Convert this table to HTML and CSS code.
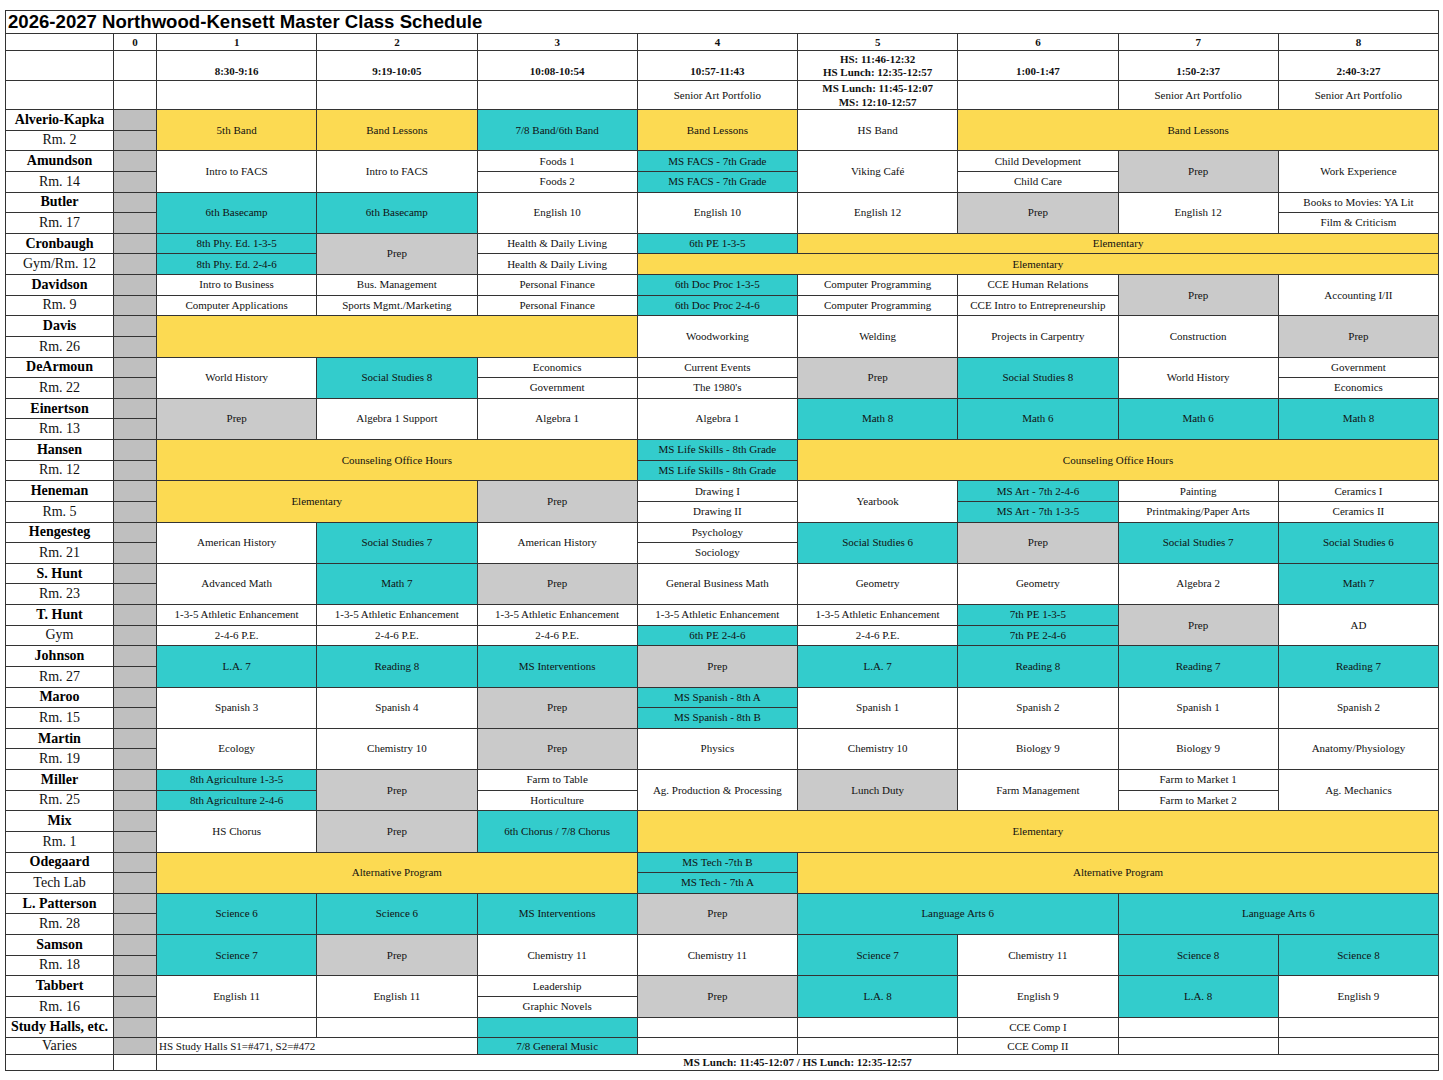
FILE: index.html
```html
<!DOCTYPE html>
<html>
<head>
<meta charset="utf-8">
<title>2026-2027 Northwood-Kensett Master Class Schedule</title>
<link rel="stylesheet" href="styles.css">
</head>
<body>
<table class="sched">
<colgroup><col class="ca"><col class="c0"><col class="cp"><col class="cp"><col class="cp"><col class="cp"><col class="cp"><col class="cp"><col class="cp"><col class="cp"></colgroup>
<tr class="h-title"><td colspan="10" class="title">2026-2027 Northwood-Kensett Master Class Schedule</td></tr>
<tr class="h-num"><td></td><td>0</td><td>1</td><td>2</td><td>3</td><td>4</td><td>5</td><td>6</td><td>7</td><td>8</td></tr>
<tr class="h-time"><td></td><td></td><td>8:30-9:16</td><td>9:19-10:05</td><td>10:08-10:54</td><td>10:57-11:43</td><td class="two">HS: 11:46-12:32<br>HS Lunch: 12:35-12:57</td><td>1:00-1:47</td><td>1:50-2:37</td><td>2:40-3:27</td></tr>
<tr class="h-sen"><td></td><td></td><td></td><td></td><td></td><td>Senior Art Portfolio</td><td class="bold">MS Lunch: 11:45-12:07<br>MS: 12:10-12:57</td><td></td><td>Senior Art Portfolio</td><td>Senior Art Portfolio</td></tr>

<tr class="r"><td class="tn">Alverio-Kapka</td><td class="z"></td><td rowspan="2" class="y">5th Band</td><td rowspan="2" class="y">Band Lessons</td><td rowspan="2" class="t">7/8 Band/6th Band</td><td rowspan="2" class="y">Band Lessons</td><td rowspan="2">HS Band</td><td rowspan="2" colspan="3" class="y">Band Lessons</td></tr>
<tr class="r"><td class="rm">Rm. 2</td><td class="z"></td></tr>

<tr class="r"><td class="tn">Amundson</td><td class="z"></td><td rowspan="2">Intro to FACS</td><td rowspan="2">Intro to FACS</td><td>Foods 1</td><td class="t">MS FACS - 7th Grade</td><td rowspan="2">Viking Café</td><td>Child Development</td><td rowspan="2" class="g">Prep</td><td rowspan="2">Work Experience</td></tr>
<tr class="r"><td class="rm">Rm. 14</td><td class="z"></td><td>Foods 2</td><td class="t">MS FACS - 7th Grade</td><td>Child Care</td></tr>

<tr class="r"><td class="tn">Butler</td><td class="z"></td><td rowspan="2" class="t">6th Basecamp</td><td rowspan="2" class="t">6th Basecamp</td><td rowspan="2">English 10</td><td rowspan="2">English 10</td><td rowspan="2">English 12</td><td rowspan="2" class="g">Prep</td><td rowspan="2">English 12</td><td>Books to Movies: YA Lit</td></tr>
<tr class="r"><td class="rm">Rm. 17</td><td class="z"></td><td>Film &amp; Criticism</td></tr>

<tr class="r"><td class="tn">Cronbaugh</td><td class="z"></td><td class="t">8th Phy. Ed. 1-3-5</td><td rowspan="2" class="g">Prep</td><td>Health &amp; Daily Living</td><td class="t">6th PE 1-3-5</td><td colspan="4" class="y">Elementary</td></tr>
<tr class="r"><td class="rm">Gym/Rm. 12</td><td class="z"></td><td class="t">8th Phy. Ed. 2-4-6</td><td>Health &amp; Daily Living</td><td colspan="5" class="y">Elementary</td></tr>

<tr class="r"><td class="tn">Davidson</td><td class="z"></td><td>Intro to Business</td><td>Bus. Management</td><td>Personal Finance</td><td class="t">6th Doc Proc 1-3-5</td><td>Computer Programming</td><td>CCE Human Relations</td><td rowspan="2" class="g">Prep</td><td rowspan="2">Accounting I/II</td></tr>
<tr class="r"><td class="rm">Rm. 9</td><td class="z"></td><td>Computer Applications</td><td>Sports Mgmt./Marketing</td><td>Personal Finance</td><td class="t">6th Doc Proc 2-4-6</td><td>Computer Programming</td><td>CCE Intro to Entrepreneurship</td></tr>

<tr class="r"><td class="tn">Davis</td><td class="z"></td><td rowspan="2" colspan="3" class="y"></td><td rowspan="2">Woodworking</td><td rowspan="2">Welding</td><td rowspan="2">Projects in Carpentry</td><td rowspan="2">Construction</td><td rowspan="2" class="g">Prep</td></tr>
<tr class="r"><td class="rm">Rm. 26</td><td class="z"></td></tr>

<tr class="r"><td class="tn">DeArmoun</td><td class="z"></td><td rowspan="2">World History</td><td rowspan="2" class="t">Social Studies 8</td><td>Economics</td><td>Current Events</td><td rowspan="2" class="g">Prep</td><td rowspan="2" class="t">Social Studies 8</td><td rowspan="2">World History</td><td>Government</td></tr>
<tr class="r"><td class="rm">Rm. 22</td><td class="z"></td><td>Government</td><td>The 1980's</td><td>Economics</td></tr>

<tr class="r"><td class="tn">Einertson</td><td class="z"></td><td rowspan="2" class="g">Prep</td><td rowspan="2">Algebra 1 Support</td><td rowspan="2">Algebra 1</td><td rowspan="2">Algebra 1</td><td rowspan="2" class="t">Math 8</td><td rowspan="2" class="t">Math 6</td><td rowspan="2" class="t">Math 6</td><td rowspan="2" class="t">Math 8</td></tr>
<tr class="r"><td class="rm">Rm. 13</td><td class="z"></td></tr>

<tr class="r"><td class="tn">Hansen</td><td class="z"></td><td rowspan="2" colspan="3" class="y">Counseling Office Hours</td><td class="t">MS Life Skills - 8th Grade</td><td rowspan="2" colspan="4" class="y">Counseling Office Hours</td></tr>
<tr class="r"><td class="rm">Rm. 12</td><td class="z"></td><td class="t">MS Life Skills - 8th Grade</td></tr>

<tr class="r"><td class="tn">Heneman</td><td class="z"></td><td rowspan="2" colspan="2" class="y">Elementary</td><td rowspan="2" class="g">Prep</td><td>Drawing I</td><td rowspan="2">Yearbook</td><td class="t">MS Art - 7th 2-4-6</td><td>Painting</td><td>Ceramics I</td></tr>
<tr class="r"><td class="rm">Rm. 5</td><td class="z"></td><td>Drawing II</td><td class="t">MS Art - 7th 1-3-5</td><td>Printmaking/Paper Arts</td><td>Ceramics II</td></tr>

<tr class="r"><td class="tn">Hengesteg</td><td class="z"></td><td rowspan="2">American History</td><td rowspan="2" class="t">Social Studies 7</td><td rowspan="2">American History</td><td>Psychology</td><td rowspan="2" class="t">Social Studies 6</td><td rowspan="2" class="g">Prep</td><td rowspan="2" class="t">Social Studies 7</td><td rowspan="2" class="t">Social Studies 6</td></tr>
<tr class="r"><td class="rm">Rm. 21</td><td class="z"></td><td>Sociology</td></tr>

<tr class="r"><td class="tn">S. Hunt</td><td class="z"></td><td rowspan="2">Advanced Math</td><td rowspan="2" class="t">Math 7</td><td rowspan="2" class="g">Prep</td><td rowspan="2">General Business Math</td><td rowspan="2">Geometry</td><td rowspan="2">Geometry</td><td rowspan="2">Algebra 2</td><td rowspan="2" class="t">Math 7</td></tr>
<tr class="r"><td class="rm">Rm. 23</td><td class="z"></td></tr>

<tr class="r"><td class="tn">T. Hunt</td><td class="z"></td><td>1-3-5 Athletic Enhancement</td><td>1-3-5 Athletic Enhancement</td><td>1-3-5 Athletic Enhancement</td><td>1-3-5 Athletic Enhancement</td><td>1-3-5 Athletic Enhancement</td><td class="t">7th PE 1-3-5</td><td rowspan="2" class="g">Prep</td><td rowspan="2">AD</td></tr>
<tr class="r"><td class="rm">Gym</td><td class="z"></td><td>2-4-6 P.E.</td><td>2-4-6 P.E.</td><td>2-4-6 P.E.</td><td class="t">6th PE 2-4-6</td><td>2-4-6 P.E.</td><td class="t">7th PE 2-4-6</td></tr>

<tr class="r"><td class="tn">Johnson</td><td class="z"></td><td rowspan="2" class="t">L.A. 7</td><td rowspan="2" class="t">Reading 8</td><td rowspan="2" class="t">MS Interventions</td><td rowspan="2" class="g">Prep</td><td rowspan="2" class="t">L.A. 7</td><td rowspan="2" class="t">Reading 8</td><td rowspan="2" class="t">Reading 7</td><td rowspan="2" class="t">Reading 7</td></tr>
<tr class="r"><td class="rm">Rm. 27</td><td class="z"></td></tr>

<tr class="r"><td class="tn">Maroo</td><td class="z"></td><td rowspan="2">Spanish 3</td><td rowspan="2">Spanish 4</td><td rowspan="2" class="g">Prep</td><td class="t">MS Spanish - 8th A</td><td rowspan="2">Spanish 1</td><td rowspan="2">Spanish 2</td><td rowspan="2">Spanish 1</td><td rowspan="2">Spanish 2</td></tr>
<tr class="r"><td class="rm">Rm. 15</td><td class="z"></td><td class="t">MS Spanish - 8th B</td></tr>

<tr class="r"><td class="tn">Martin</td><td class="z"></td><td rowspan="2">Ecology</td><td rowspan="2">Chemistry 10</td><td rowspan="2" class="g">Prep</td><td rowspan="2">Physics</td><td rowspan="2">Chemistry 10</td><td rowspan="2">Biology 9</td><td rowspan="2">Biology 9</td><td rowspan="2">Anatomy/Physiology</td></tr>
<tr class="r"><td class="rm">Rm. 19</td><td class="z"></td></tr>

<tr class="r"><td class="tn">Miller</td><td class="z"></td><td class="t">8th Agriculture 1-3-5</td><td rowspan="2" class="g">Prep</td><td>Farm to Table</td><td rowspan="2">Ag. Production &amp; Processing</td><td rowspan="2" class="g">Lunch Duty</td><td rowspan="2">Farm Management</td><td>Farm to Market 1</td><td rowspan="2">Ag. Mechanics</td></tr>
<tr class="r"><td class="rm">Rm. 25</td><td class="z"></td><td class="t">8th Agriculture 2-4-6</td><td>Horticulture</td><td>Farm to Market 2</td></tr>

<tr class="r"><td class="tn">Mix</td><td class="z"></td><td rowspan="2">HS Chorus</td><td rowspan="2" class="g">Prep</td><td rowspan="2" class="t">6th Chorus / 7/8 Chorus</td><td rowspan="2" colspan="5" class="y">Elementary</td></tr>
<tr class="r"><td class="rm">Rm. 1</td><td class="z"></td></tr>

<tr class="r"><td class="tn">Odegaard</td><td class="z"></td><td rowspan="2" colspan="3" class="y">Alternative Program</td><td class="t">MS Tech -7th B</td><td rowspan="2" colspan="4" class="y">Alternative Program</td></tr>
<tr class="r"><td class="rm">Tech Lab</td><td class="z"></td><td class="t">MS Tech - 7th A</td></tr>

<tr class="r"><td class="tn">L. Patterson</td><td class="z"></td><td rowspan="2" class="t">Science 6</td><td rowspan="2" class="t">Science 6</td><td rowspan="2" class="t">MS Interventions</td><td rowspan="2" class="g">Prep</td><td rowspan="2" colspan="2" class="t">Language Arts 6</td><td rowspan="2" colspan="2" class="t">Language Arts 6</td></tr>
<tr class="r"><td class="rm">Rm. 28</td><td class="z"></td></tr>

<tr class="r"><td class="tn">Samson</td><td class="z"></td><td rowspan="2" class="t">Science 7</td><td rowspan="2" class="g">Prep</td><td rowspan="2">Chemistry 11</td><td rowspan="2">Chemistry 11</td><td rowspan="2" class="t">Science 7</td><td rowspan="2">Chemistry 11</td><td rowspan="2" class="t">Science 8</td><td rowspan="2" class="t">Science 8</td></tr>
<tr class="r"><td class="rm">Rm. 18</td><td class="z"></td></tr>

<tr class="r"><td class="tn">Tabbert</td><td class="z"></td><td rowspan="2">English 11</td><td rowspan="2">English 11</td><td>Leadership</td><td rowspan="2" class="g">Prep</td><td rowspan="2" class="t">L.A. 8</td><td rowspan="2">English 9</td><td rowspan="2" class="t">L.A. 8</td><td rowspan="2">English 9</td></tr>
<tr class="r"><td class="rm">Rm. 16</td><td class="z"></td><td>Graphic Novels</td></tr>

<tr class="r"><td class="tn">Study Halls, etc.</td><td class="z"></td><td></td><td></td><td class="t"></td><td></td><td></td><td>CCE Comp I</td><td></td><td></td></tr>
<tr class="r-short"><td class="rm">Varies</td><td class="z"></td><td colspan="2" class="left">HS Study Halls S1=#471, S2=#472</td><td class="t">7/8 General Music</td><td></td><td></td><td>CCE Comp II</td><td></td><td></td></tr>

<tr class="r-foot"><td></td><td></td><td colspan="8" class="bold">MS Lunch: 11:45-12:07 / HS Lunch: 12:35-12:57</td></tr>
</table>
</body>
</html>
```
FILE: styles.css
```css
html, body {
  margin: 0;
  background: #ffffff;
}
body {
  padding: 10px 5px 0 5px;
  font-family: "Liberation Serif", "Times New Roman", serif;
  color: #111;
}
.sched {
  border-collapse: collapse;
  table-layout: fixed;
  width: 1433px;
}
.ca { width: 108px; }
.c0 { width: 43px; }
.cp { width: 160.25px; }

.sched td {
  border: 1px solid #333;
  padding: 0;
  text-align: center;
  vertical-align: middle;
  font-size: 11px;
  line-height: 13px;
  white-space: nowrap;
  overflow: hidden;
}
.h-title td { height: 22px; }
.sched td.title {
  font-family: "Liberation Sans", Arial, sans-serif;
  font-weight: bold;
  font-size: 18.6px;
  line-height: 22px;
  text-align: left;
  padding-left: 2px;
  color: #000;
}
.h-num td { height: 16px; font-weight: bold; }
.h-time td {
  height: 27px;
  font-weight: bold;
  vertical-align: bottom;
  padding-bottom: 2px;
}
.sched .h-time td.two { vertical-align: middle; line-height: 13px; padding-bottom: 0; }
.h-sen td { height: 27px; }
.sched .h-sen td.bold { line-height: 14px; }
.bold { font-weight: bold; }

.r { height: 20.63px; }
.r-short { height: 17px; }
.r-foot { height: 16px; }
.r-foot td { font-weight: bold; }

.sched td.tn {
  font-weight: bold;
  font-size: 14px;
  line-height: 16px;
  color: #000;
}
.sched td.rm {
  font-size: 14px;
  line-height: 16px;
}
.sched td.z { background: #bfbfbf; }
.sched td.y { background: #fcda52; }
.sched td.t { background: #33cccc; }
.sched td.g { background: #cacaca; }
.sched td.left { text-align: left; padding-left: 2px; }
```
